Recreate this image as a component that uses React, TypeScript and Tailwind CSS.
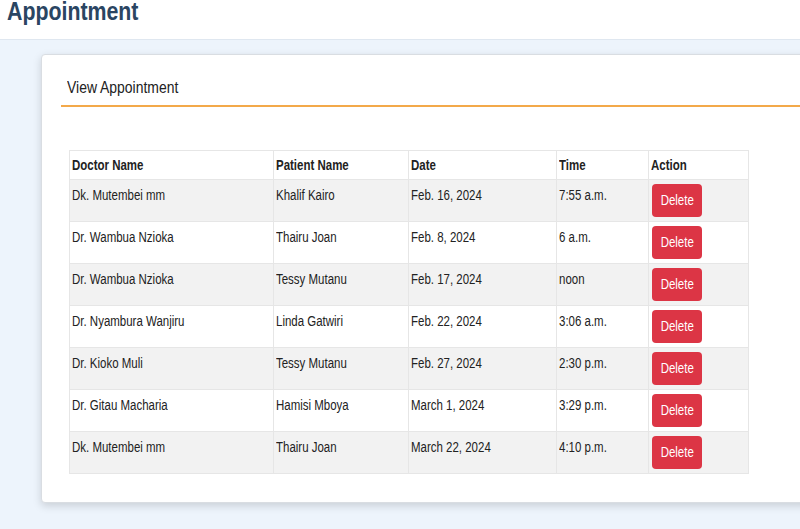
import React from "react"

type Appointment = {
  doctor: string
  patient: string
  date: string
  time: string
}

const appointments: Appointment[] = [
  { doctor: "Dk. Mutembei mm", patient: "Khalif Kairo", date: "Feb. 16, 2024", time: "7:55 a.m." },
  { doctor: "Dr. Wambua Nzioka", patient: "Thairu Joan", date: "Feb. 8, 2024", time: "6 a.m." },
  { doctor: "Dr. Wambua Nzioka", patient: "Tessy Mutanu", date: "Feb. 17, 2024", time: "noon" },
  { doctor: "Dr. Nyambura Wanjiru", patient: "Linda Gatwiri", date: "Feb. 22, 2024", time: "3:06 a.m." },
  { doctor: "Dr. Kioko Muli", patient: "Tessy Mutanu", date: "Feb. 27, 2024", time: "2:30 p.m." },
  { doctor: "Dr. Gitau Macharia", patient: "Hamisi Mboya", date: "March 1, 2024", time: "3:29 p.m." },
  { doctor: "Dk. Mutembei mm", patient: "Thairu Joan", date: "March 22, 2024", time: "4:10 p.m." },
]

// the page uses a narrow face; squeeze Liberation Sans to the same width
function Narrow({ children, center = false }: { children: React.ReactNode; center?: boolean }) {
  return (
    <span className={`inline-block whitespace-nowrap scale-x-[0.82] ${center ? "origin-center" : "origin-left"}`}>
      {children}
    </span>
  )
}

const cell = "border border-[#e6e6e6] px-[2px] text-left"

export default function App() {
  return (
    <div
      className="min-h-screen w-full overflow-hidden bg-[#edf4fc] text-[#222]"
      style={{ fontFamily: '"Liberation Sans", Arial, sans-serif' }}
    >
      {/* Page header */}
      <header className="h-[40px] overflow-hidden bg-white border-b border-[#dfe7f0]">
        <h1 className="pl-[7px] -mt-[4px] text-[26px] leading-[30px] font-bold text-[#2a4562]">
          <Narrow>Appointment</Narrow>
        </h1>
      </header>

      <main className="pt-[14px] pl-[41px]">
        <div className="w-[800px] h-[449px] bg-white rounded-[4px] border border-[#d9dde2] shadow-[0_3px_8px_rgba(0,0,0,0.15)]">
          {/* Card title */}
          <div className="ml-[19px] h-[52px] pt-[22px] border-b-2 border-[#f3a94a]">
            <h2 className="pl-[6px] h-[22px] text-[17px] leading-[22px] text-[#222]">
              <Narrow>View Appointment</Narrow>
            </h2>
          </div>

          {/* Appointments table */}
          <div className="ml-[27px] mt-[43px]">
            <table className="table-fixed border-collapse border border-[#e6e6e6] text-[14px]">
              <thead>
                <tr className="h-[29px] bg-white">
                  <th className={`w-[204px] font-bold ${cell}`}><Narrow>Doctor Name</Narrow></th>
                  <th className={`w-[135px] font-bold ${cell}`}><Narrow>Patient Name</Narrow></th>
                  <th className={`w-[148px] font-bold ${cell}`}><Narrow>Date</Narrow></th>
                  <th className={`w-[92px] font-bold ${cell}`}><Narrow>Time</Narrow></th>
                  <th className={`w-[100px] font-bold ${cell}`}><Narrow>Action</Narrow></th>
                </tr>
              </thead>
              <tbody>
                {appointments.map((a, i) => (
                  <tr key={i} className={`h-[42px] ${i % 2 === 0 ? "bg-[#f2f2f2]" : "bg-white"}`}>
                    <td className={`${cell} pt-[5px] align-top leading-[20px]`}><Narrow>{a.doctor}</Narrow></td>
                    <td className={`${cell} pt-[5px] align-top leading-[20px]`}><Narrow>{a.patient}</Narrow></td>
                    <td className={`${cell} pt-[5px] align-top leading-[20px]`}><Narrow>{a.date}</Narrow></td>
                    <td className={`${cell} pt-[5px] align-top leading-[20px]`}><Narrow>{a.time}</Narrow></td>
                    <td className={`${cell} pt-[4px] pb-[4px] align-top`}>
                      <button className="ml-[1px] h-[33px] w-[50px] rounded-[4px] bg-[#dc3545] text-[14px] text-white">
                        <Narrow center>Delete</Narrow>
                      </button>
                    </td>
                  </tr>
                ))}
              </tbody>
            </table>
          </div>
        </div>
      </main>
    </div>
  )
}
